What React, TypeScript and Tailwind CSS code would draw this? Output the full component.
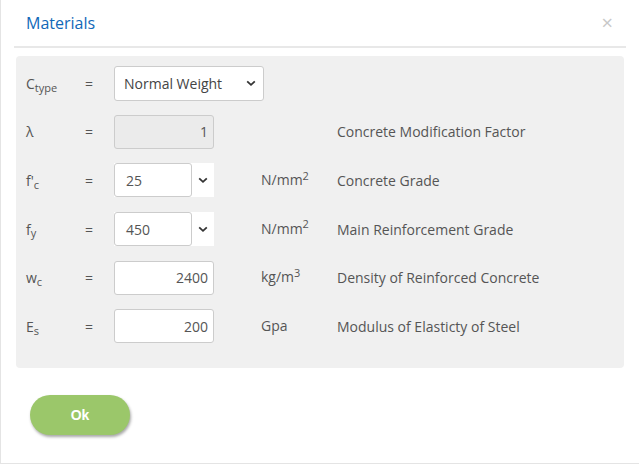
import React from "react";

const Chevron = () => (
  <svg width="10" height="7" viewBox="0 0 10 7" className="shrink-0">
    <path d="M1.2 1.4 L5 4.9 L8.8 1.4" fill="none" stroke="#333" strokeWidth="1.8" />
  </svg>
);

function Row({
  label,
  children,
  unit,
  desc,
}: {
  label: React.ReactNode;
  children: React.ReactNode;
  unit?: React.ReactNode;
  desc?: string;
}) {
  return (
    <div className="flex h-[48.6px] items-center">
      <div className="w-[59px] text-[14px] text-[#555]">{label}</div>
      <div className="w-[29px] text-[14px] text-[#555]">=</div>
      <div className="w-[147px]">{children}</div>
      <div className="w-[76px] self-start pt-[13px] text-[14px] text-[#555]">{unit}</div>
      <div className="text-[14px] text-[#555]">{desc}</div>
    </div>
  );
}

const NumBox = ({ value, disabled }: { value: string; disabled?: boolean }) => (
  <div
    className={`flex h-[34px] w-[100px] items-center justify-end rounded-[3px] border border-[#ccc] px-[5px] text-[14px] text-[#555] ${
      disabled ? "bg-[#ebebeb]" : "bg-white"
    }`}
  >
    {value}
  </div>
);

const ComboBox = ({ value }: { value: string }) => (
  <div className="flex h-[34px] w-[100px] items-center bg-white">
    <div className="flex h-full w-[78px] items-center rounded-[3px] border border-[#ccc] px-[11px] text-[14px] text-[#555]">
      {value}
    </div>
    <div className="flex flex-1 items-center justify-center">
      <Chevron />
    </div>
  </div>
);

export default function App() {
  return (
    <div
      className="h-[465px] w-[639px] bg-white"
      style={{ fontFamily: '"Open Sans", "Liberation Sans", sans-serif' }}
    >
      <div className="h-[464px] border-b border-l border-[#e4e4e4]">
        <div className="flex h-[46px] items-center justify-between pl-[25px] pr-[26px]">
          <span className="text-[16px] text-[#1168b8]">Materials</span>
          <span className="text-[20px] leading-none text-[#c8c8c8]">×</span>
        </div>
        <div className="mx-[13px] h-[2px] bg-[#e8e8e8]" />
        <div className="mx-[15px] mt-[8px] h-[312px] rounded-[4px] bg-[#f0f0f0] pl-[10px] pt-[3px]">
          <Row
            label={
              <span>
                C<sub className="text-[11px]">type</sub>
              </span>
            }
          >
            <div className="flex h-[35px] w-[150px] items-center justify-between rounded-[3px] border border-[#ccc] bg-white pl-[9px] pr-[7px] text-[14px] text-[#444]">
              <span>Normal Weight</span>
              <Chevron />
            </div>
          </Row>
          <Row label="λ" desc="Concrete Modification Factor">
            <NumBox value="1" disabled />
          </Row>
          <Row
            label={
              <span>
                f'<sub className="text-[11px]">c</sub>
              </span>
            }
            unit={
              <span>
                N/mm<sup className="text-[11px]">2</sup>
              </span>
            }
            desc="Concrete Grade"
          >
            <ComboBox value="25" />
          </Row>
          <Row
            label={
              <span>
                f<sub className="text-[11px]">y</sub>
              </span>
            }
            unit={
              <span>
                N/mm<sup className="text-[11px]">2</sup>
              </span>
            }
            desc="Main Reinforcement Grade"
          >
            <ComboBox value="450" />
          </Row>
          <Row
            label={
              <span>
                w<sub className="text-[11px]">c</sub>
              </span>
            }
            unit={
              <span>
                kg/m<sup className="text-[11px]">3</sup>
              </span>
            }
            desc="Density of Reinforced Concrete"
          >
            <NumBox value="2400" />
          </Row>
          <Row
            label={
              <span>
                E<sub className="text-[11px]">s</sub>
              </span>
            }
            unit="Gpa"
            desc="Modulus of Elasticty of Steel"
          >
            <NumBox value="200" />
          </Row>
        </div>
        <div className="pl-[29px] pt-[27px]">
          <button
            className="h-[40px] w-[100px] rounded-full bg-[#9bc76a] text-[14px] font-bold text-white shadow-[1px_2px_3px_rgba(0,0,0,0.35)]"
            style={{ fontFamily: '"Liberation Sans", Arial, sans-serif' }}
          >
            Ok
          </button>
        </div>
      </div>
    </div>
  );
}
